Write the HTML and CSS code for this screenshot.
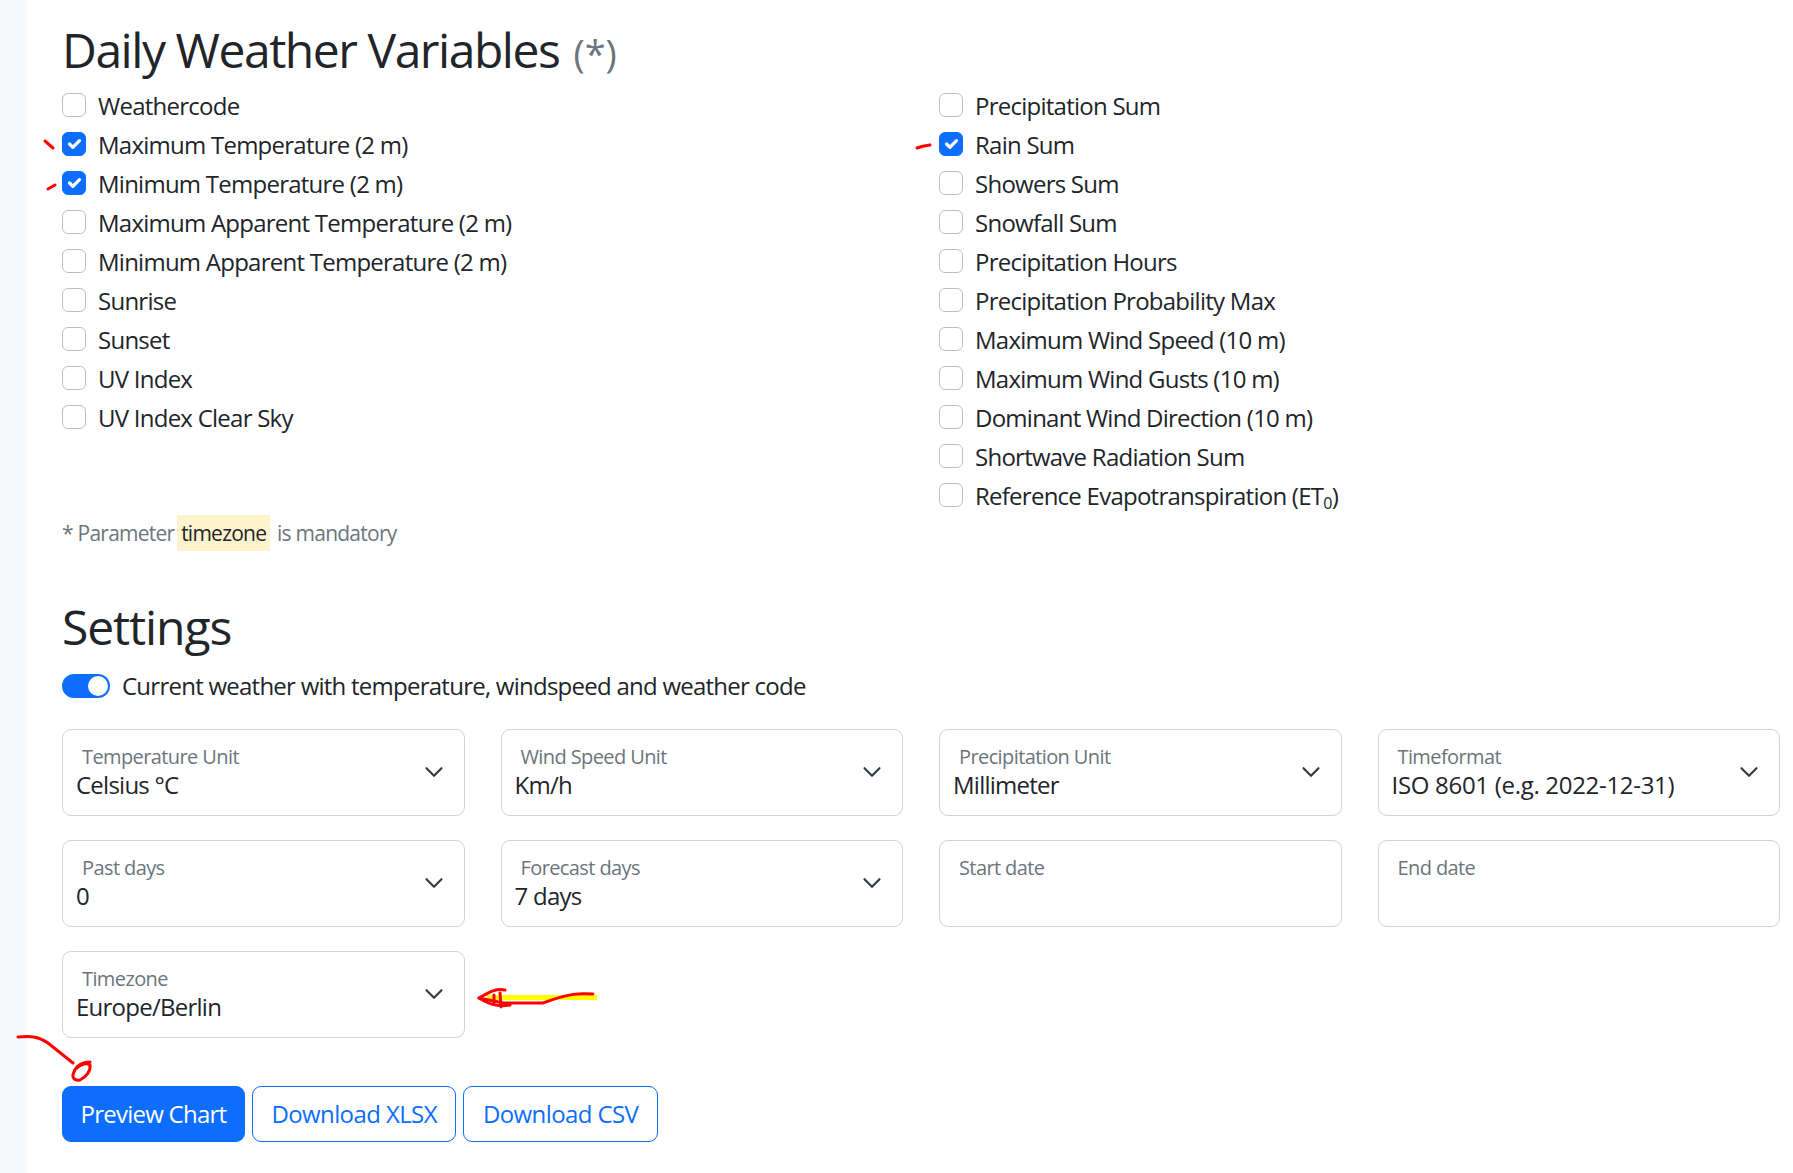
FILE: index.html
```html
<!DOCTYPE html>
<html lang="en">
<head>
    <meta charset="UTF-8">
    <meta name="viewport" content="width=device-width, initial-scale=1.0">
    <title>Weather Forecast API</title>
    <link rel="stylesheet" href="styles.css">
</head>
<body>
    <div class="sidebar"></div>
    <main class="content">
        <h2 class="heading">Daily Weather Variables <small class="muted">(*)</small></h2>
        <div class="vars">
            <div class="var-col">
                <label class="check"><span class="box"></span>Weathercode</label>
                <label class="check"><span class="box on"><svg viewBox="0 0 20 20"><path d="m6 10 3 3 6-6"/></svg></span>Maximum Temperature (2 m)</label>
                <label class="check"><span class="box on"><svg viewBox="0 0 20 20"><path d="m6 10 3 3 6-6"/></svg></span>Minimum Temperature (2 m)</label>
                <label class="check"><span class="box"></span>Maximum Apparent Temperature (2 m)</label>
                <label class="check"><span class="box"></span>Minimum Apparent Temperature (2 m)</label>
                <label class="check"><span class="box"></span>Sunrise</label>
                <label class="check"><span class="box"></span>Sunset</label>
                <label class="check"><span class="box"></span>UV Index</label>
                <label class="check"><span class="box"></span>UV Index Clear Sky</label>
            </div>
            <div class="var-col">
                <label class="check"><span class="box"></span>Precipitation Sum</label>
                <label class="check"><span class="box on"><svg viewBox="0 0 20 20"><path d="m6 10 3 3 6-6"/></svg></span>Rain Sum</label>
                <label class="check"><span class="box"></span>Showers Sum</label>
                <label class="check"><span class="box"></span>Snowfall Sum</label>
                <label class="check"><span class="box"></span>Precipitation Hours</label>
                <label class="check"><span class="box"></span>Precipitation Probability Max</label>
                <label class="check"><span class="box"></span>Maximum Wind Speed (10 m)</label>
                <label class="check"><span class="box"></span>Maximum Wind Gusts (10 m)</label>
                <label class="check"><span class="box"></span>Dominant Wind Direction (10 m)</label>
                <label class="check"><span class="box"></span>Shortwave Radiation Sum</label>
                <label class="check"><span class="box"></span><span>Reference Evapotranspiration (ET<sub>0</sub>)</span></label>
            </div>
        </div>
        <p class="note">* Parameter <mark>timezone</mark> is mandatory</p>

        <h2 class="heading settings">Settings</h2>
        <label class="switch-row"><span class="switch"><span class="knob"></span></span>Current weather with temperature, windspeed and weather code</label>

        <div class="fields">
            <div class="field"><span class="field-label">Temperature Unit</span><span class="field-value">Celsius °C</span><svg class="chev" viewBox="0 0 16 16"><path d="m2 5 6 6 6-6"/></svg></div>
            <div class="field"><span class="field-label">Wind Speed Unit</span><span class="field-value">Km/h</span><svg class="chev" viewBox="0 0 16 16"><path d="m2 5 6 6 6-6"/></svg></div>
            <div class="field"><span class="field-label">Precipitation Unit</span><span class="field-value">Millimeter</span><svg class="chev" viewBox="0 0 16 16"><path d="m2 5 6 6 6-6"/></svg></div>
            <div class="field"><span class="field-label">Timeformat</span><span class="field-value digits">ISO 8601 (e.g. 2022-12-31)</span><svg class="chev" viewBox="0 0 16 16"><path d="m2 5 6 6 6-6"/></svg></div>
            <div class="field"><span class="field-label">Past days</span><span class="field-value">0</span><svg class="chev" viewBox="0 0 16 16"><path d="m2 5 6 6 6-6"/></svg></div>
            <div class="field"><span class="field-label">Forecast days</span><span class="field-value">7 days</span><svg class="chev" viewBox="0 0 16 16"><path d="m2 5 6 6 6-6"/></svg></div>
            <div class="field"><span class="field-label">Start date</span></div>
            <div class="field"><span class="field-label">End date</span></div>
            <div class="field"><span class="field-label">Timezone</span><span class="field-value">Europe/Berlin</span><svg class="chev" viewBox="0 0 16 16"><path d="m2 5 6 6 6-6"/></svg></div>
        </div>

        <div class="buttons">
            <button class="btn primary">Preview Chart</button>
            <button class="btn outline">Download XLSX</button>
            <button class="btn outline">Download CSV</button>
        </div>
    </main>

    <!-- hand drawn marks on top of the screenshot -->
    <svg class="marks" viewBox="0 0 1793 1173">
        <path class="red" d="M45 141 53 148"/>
        <path class="red" d="M48 189 55 185"/>
        <path class="red" d="M917 148Q922 146 930 145"/>
        <path class="yellow" d="M487 997.5H597"/>
        <path class="red" d="M593 994C580 993 570 993 543 1003L503 1003 479 998"/>
        <path class="red" d="M505 990C495 988 488 993 479 998 486 1002 495 1008 510 1005M500 993 501 1007M494 995V1004"/>
        <path class="red" d="M18 1037C30 1036 38 1036 48 1043L73 1063"/>
        <path class="red" d="M90 1062C82 1062 76 1066 74 1072 71 1078 75 1081 80 1080 86 1077 91 1071 90 1065 86 1062 80 1065 77 1068"/>
    </svg>
</body>
</html>
```
FILE: styles.css
```css
* {
    box-sizing: border-box;
}
body {
    margin: 0;
    background: #fff;
    color: #212529;
    font-family: "Open Sans", sans-serif;
    font-size: 24px;
    line-height: 36px;
    letter-spacing: -0.75px;
    overflow: hidden;
}
.sidebar {
    position: fixed;
    left: 0;
    top: 0;
    bottom: 0;
    width: 26px;
    background: #f8f9fa;
}
.content {
    margin-left: 62px;
    width: 1718px;
    height: 1173px;
    overflow: hidden;
}
.heading {
    margin: 0;
    padding-top: 21px;
    font-size: 48px;
    line-height: 58px;
    font-weight: 400;
    letter-spacing: -1.45px;
}
.muted {
    margin-left: 3px;
    font-size: 38px;
    color: #6c757d;
    letter-spacing: 0;
}
.vars {
    display: grid;
    grid-template-columns: 1fr 1fr;
    column-gap: 36px;
    margin-top: 6px;
}
.check {
    display: flex;
    align-items: center;
    height: 36px;
    margin-bottom: 3px;
}
.box {
    flex: none;
    width: 24px;
    height: 24px;
    margin: -2px 12px 0 0;
    border: 1px solid #bfbfbf;
    border-radius: 6px;
    background: #fff;
}
.box.on {
    border-color: #0d6efd;
    background: #0d6efd;
}
.box svg {
    display: block;
    width: 22px;
    height: 22px;
    fill: none;
    stroke: #fff;
    stroke-width: 3;
    stroke-linecap: round;
    stroke-linejoin: round;
}
sub {
    font-size: 16px;
    line-height: 0;
    vertical-align: -4px;
}
.note {
    margin: -2px 0 0;
    font-size: 21px;
    color: #6c757d;
    line-height: 36px;
}
mark {
    display: inline-block;
    margin: 0 2px 0 -2px;
    padding: 0 4px;
    background: #fff3cd;
    color: #212529;
}
.settings {
    padding-top: 0;
    margin-top: 47px;
    letter-spacing: -1.1px;
}
.switch-row {
    display: flex;
    align-items: center;
    height: 36px;
    margin-top: 12px;
}
.switch {
    flex: none;
    display: flex;
    justify-content: flex-end;
    align-items: center;
    width: 48px;
    height: 24px;
    margin-right: 12px;
    padding: 0 2px;
    border-radius: 12px;
    background: #0d6efd;
}
.knob {
    width: 20px;
    height: 20px;
    border-radius: 50%;
    background: #fff;
}
.fields {
    display: grid;
    grid-template-columns: repeat(4, 1fr);
    gap: 24px 36px;
    margin-top: 25px;
}
.field {
    position: relative;
    height: 87px;
    padding: 12px 18px;
    border: 1px solid #ced4da;
    border-radius: 9px;
}
.field-label {
    display: block;
    padding-left: 1px;
    font-size: 20px;
    line-height: 30px;
    color: #6c757d;
    letter-spacing: -0.6px;
}
.field-value {
    display: block;
    line-height: 36px;
    margin-left: -5px;
    margin-top: -5px;
}
.digits {
    letter-spacing: -0.3px;
}
.chev {
    position: absolute;
    right: 20px;
    top: 32px;
    width: 20px;
    height: 20px;
    fill: none;
    stroke: #343a40;
    stroke-width: 1.7;
    stroke-linecap: round;
    stroke-linejoin: round;
}
.buttons {
    display: flex;
    gap: 7px;
    margin-top: 48px;
}
.btn {
    height: 56px;
    padding: 0 18px;
    font: inherit;
    letter-spacing: inherit;
    border: 1px solid #0d6efd;
    border-radius: 9px;
}
.primary {
    padding: 0 17.5px;
    background: #0d6efd;
    color: #fff;
}
.outline {
    padding: 0 18.5px;
    background: #fff;
    color: #0d6efd;
    letter-spacing: -0.6px;
}
.marks {
    position: fixed;
    left: 0;
    top: 0;
    width: 1793px;
    height: 1173px;
    fill: none;
    pointer-events: none;
}
.red {
    stroke: #f00;
    stroke-width: 3;
    stroke-linecap: round;
    stroke-linejoin: round;
}
.yellow {
    stroke: #ff0;
    stroke-width: 5;
}
```
